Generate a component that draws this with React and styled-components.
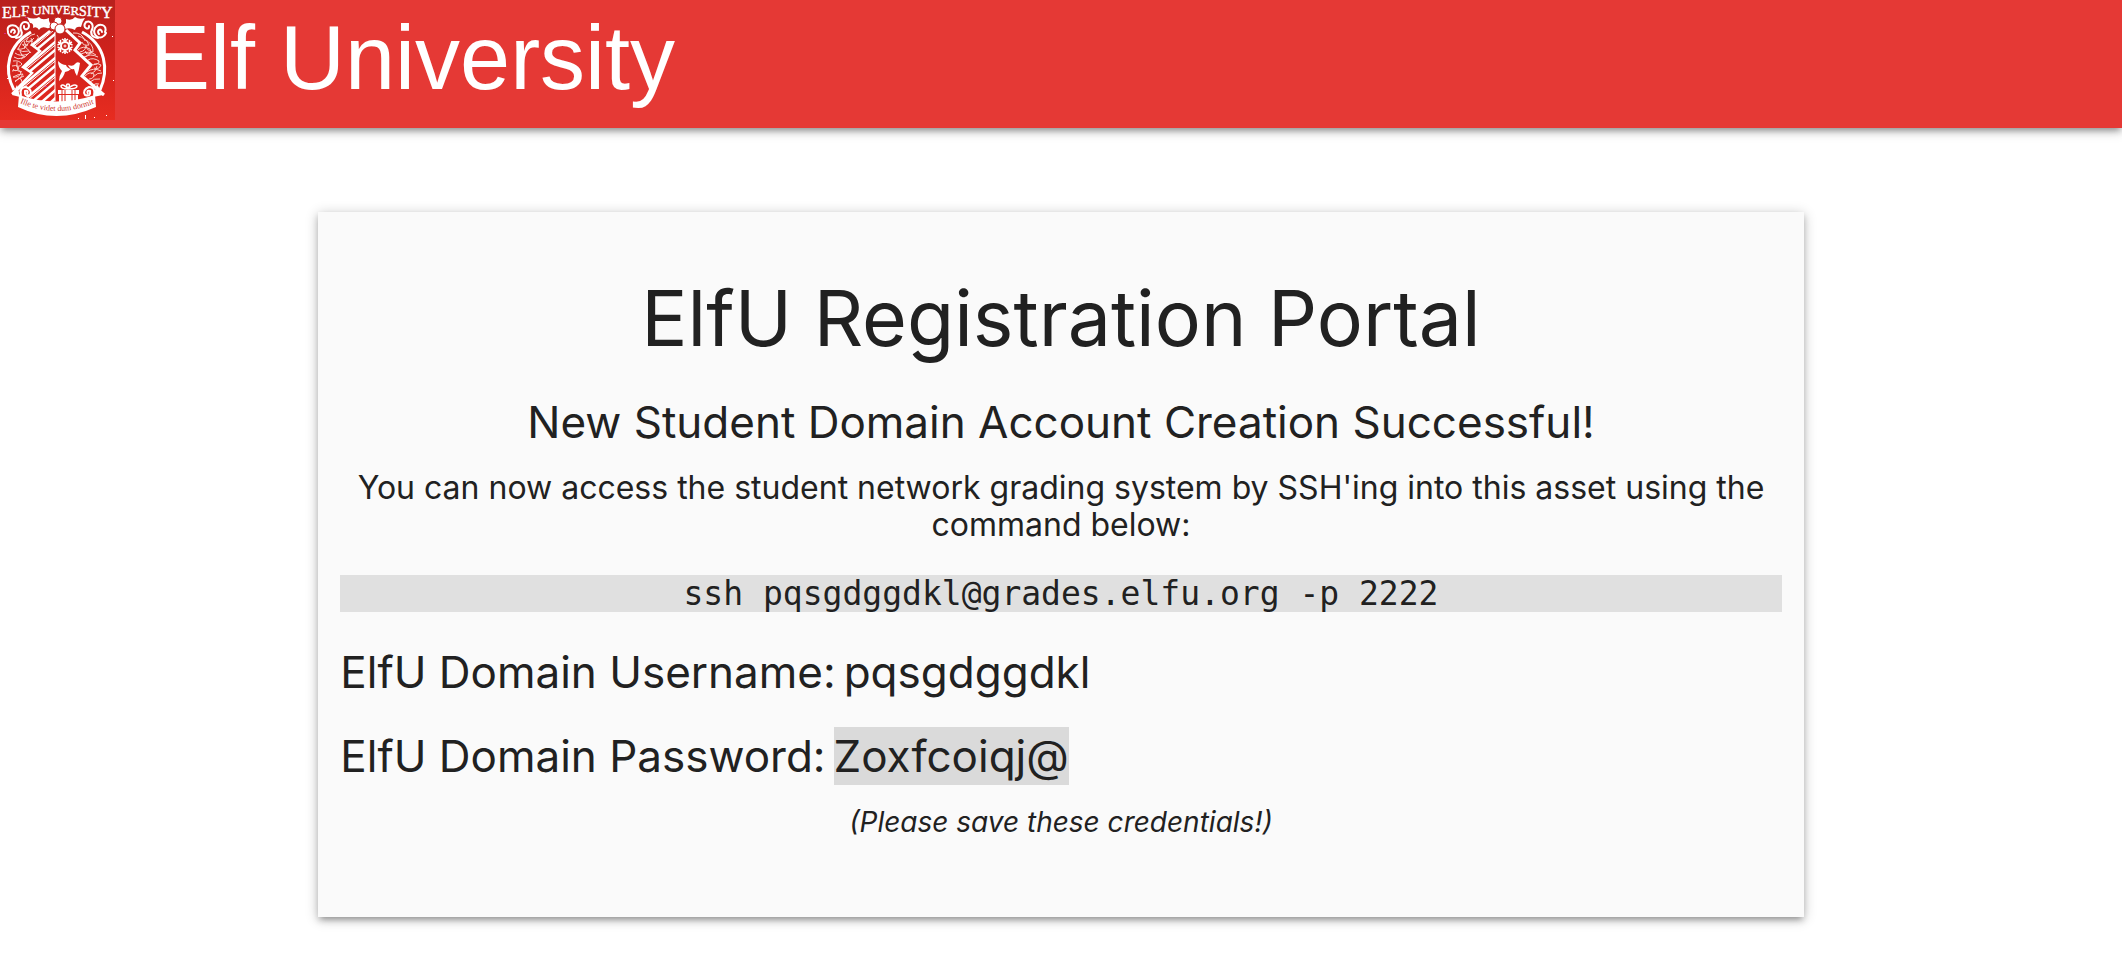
import React from 'react';
import styled, { createGlobalStyle } from 'styled-components';

const GlobalStyle = createGlobalStyle`
  * {
    box-sizing: border-box;
  }

  body {
    margin: 0;
    background: #fff;
    color: #212121;
    font-family: Inter, 'Liberation Sans', sans-serif;
  }
`;

const raised =
  '0 4px 6px 0 rgba(0, 0, 0, 0.16), 0 6px 4px -4px rgba(0, 0, 0, 0.14), 0 2px 12px 0 rgba(0, 0, 0, 0.24)';

const Page = styled.div`
  min-height: 100vh;
  padding-bottom: 32px;
`;

const Header = styled.header`
  display: flex;
  align-items: flex-start;
  gap: 35px;
  height: 128px;
  background: #e53935;
  box-shadow: ${raised};
`;

const Crest = styled.svg`
  display: block;
  flex: none;
  width: 115px;
  height: 120px;
`;

const Brand = styled.a`
  color: #fff;
  font-family: 'Liberation Sans', Arial, sans-serif;
  font-size: 90px;
  line-height: 116px;
  text-decoration: none;
  white-space: nowrap;
`;

const Card = styled.main`
  width: 70%;
  margin: 84px auto 0;
  padding: 60px 22px 79px;
  background: #fafafa;
  box-shadow: ${raised};
`;

const Title = styled.h1`
  margin: 0 0 32px;
  font-size: 77px;
  font-weight: 400;
  line-height: 92px;
  text-align: center;
`;

const Subtitle = styled.h2`
  margin: 0 0 21px;
  font-size: 44px;
  font-weight: 400;
  line-height: 52px;
  text-align: center;
`;

const Intro = styled.p`
  margin: 0 0 32px;
  font-size: 32px;
  line-height: 37px;
  text-align: center;
`;

const Command = styled.code`
  display: block;
  margin-bottom: 34px;
  background: #e0e0e0;
  font-family: 'DejaVu Sans Mono', monospace;
  font-size: 33px;
  line-height: 37px;
  text-align: center;
`;

const Credentials = styled.dl`
  display: grid;
  gap: 32px;
  margin: 0 0 24px;
  font-size: 44px;
  line-height: 52px;
`;

const Credential = styled.div`
  display: flex;
  flex-wrap: wrap;
  gap: 0 8px;
`;

const Value = styled.dd`
  margin: 0;
`;

const Selected = styled.mark`
  padding: 2px 0;
  background: #dadada;
  color: inherit;
`;

const Note = styled.p`
  margin: 0;
  font-size: 28px;
  font-style: italic;
  line-height: 32px;
  text-align: center;
`;

/* Each letter with its size and its step down from the letter before it. */
const titleLetters = [
  ['E', 16, 0], ['L', 15, -1], ['F', 15, -1], [' ', 12, 0], ['U', 13, -1],
  ['N', 12, -1], ['I', 12, 0], ['V', 12, 0], ['E', 12, 0], ['R', 13, 1],
  ['S', 14, 1], ['I', 15, 0], ['T', 15, 1], ['Y', 16, 1],
];

const leftTree = 'M50 31 L32 45 L40 51 L23 67 L32 73 L12 94';
const rightTree = 'M66 30 L80 43 L75 50 L91 65 L82 76 L104 95';

function Swirls() {
  return (
    <g fill="none" stroke="#fbd0cb" strokeWidth="1">
      <path d="M35 34q-7 1-9 8q7-1 8-4M28 37q-8 5-10 12q6 1 9-4q-3-2-5 0M17 49q5 4 12 2M15 53q5 4 13 1M14 57q4 3 8 1q3-3-1-3M13 61q6-1 9 3q-3 4-6 1M12 66q4-2 7 2q-3 5-6 1M12 71q6-2 9 2q-2 5-8 4M13 77q5-3 10-3q-2 5-8 7M15 82q3-4 9-6M31 38q2 4 0 8M23 45q5 4 8 8M20 51q1 5 5 6M37 35q3 2 0 5M33 41q-5 0-6 5M24 41q3 4 0 8M30 52q-5 6-9 7M17 62q-1 9 5 10M18 78q4 0 4 4" />
      <path d="M73 33q9-1 12 8M78 36q8 2 11 9q-6 1-7-3M84 39q10 5 9 13q-6-1-7-6M78 50q5-5 12-1q2 5-3 5q-3-2-1-3M81 54q8-4 15 1M85 57q5-4 13 0M88 60q5-3 11 1q0 4-5 3M93 65q5-3 8 0q-2 5-7 3M87 72q6-5 14-1M85 76q5-5 9-2q0 5-5 5M93 77q5-5 9-4M90 82q4-4 10-3M93 85q3-2 6-1M86 45q0 6-6 7M92 52q-5 5-8 5M97 66q-1 6-6 8" />
    </g>
  );
}

function Snowflake() {
  return (
    <g transform="translate(65 46)" fill="none" stroke="#fff">
      <circle r="4" strokeWidth="2" />
      <circle r="1" strokeWidth="1" />
      {[0, 60, 120, 180, 240, 300].map((angle) => (
        <path key={angle} transform={`rotate(${angle})`} d="M0-4V-8M-3-7L0-5L3-7" strokeWidth="1.5" />
      ))}
    </g>
  );
}

function Gift() {
  return (
    <g>
      <path d="M58 90h21v4H58zM59 95h19v9H59z" fill="#fff" />
      <path d="M62 89v15M65 89v15M72 89v15M75 89v15" stroke="#df2b20" strokeWidth="1" />
      <path d="M68 89q-7 0-7-3q2-3 7 3q-3-5 0-5q3 0 0 5q6-6 9-3q0 3-9 3" fill="none" stroke="#fff" strokeWidth="1.5" />
    </g>
  );
}

function ElfCrest() {
  return (
    <Crest viewBox="0 0 115 120" role="img" aria-label="Elf University crest">
      <defs>
        <linearGradient id="crest-red" x1="0" y1="0" x2="0" y2="1">
          <stop offset="0" stopColor="#b8211d" />
          <stop offset="0.45" stopColor="#d0221c" />
          <stop offset="1" stopColor="#e72c20" />
        </linearGradient>
        <clipPath id="crest-tree">
          <path d="M55 31H50L32 45L40 51L23 67L32 73L14 92Q35 103 55 102Z" />
        </clipPath>
        <path id="crest-motto" d="M20 103Q56 119 96 103" />
      </defs>
      <rect width="115" height="120" fill="url(#crest-red)" />
      <g fill="none" stroke="#fff" strokeWidth="3">
        <path d="M31 32C8 45 3 69 14 90" />
        <path d="M82 32C106 45 109 70 100 90" />
      </g>
      <Swirls />
      <g clipPath="url(#crest-tree)" stroke="#fff" strokeWidth="2.5">
        <path d="M10 56L60 14M10 64L60 22M10 72L60 30M10 80L60 38M10 88L60 46M10 96L60 54M10 104L60 62M10 112L60 70M18 114L60 78M28 114L60 86M38 114L60 94" />
        <path d="M10 67L60 25M10 83L60 41M10 99L60 57M10 115L60 73" strokeWidth="1" />
      </g>
      <path d="M55 32V101" stroke="#fff" strokeWidth="1" />
      <path d={leftTree} fill="none" stroke="#fff" strokeWidth="2.5" />
      <path d={rightTree} fill="none" stroke="#fff" strokeWidth="3" />
      <g fill="none" stroke="#fff" strokeWidth="2" strokeLinecap="round">
        <path d="M8 32C6 25 14 23 18 28C22 36 11 41 8 33M11 32C12 27 17 31 14 33" />
        <path d="M22 33C18 25 23 20 28 23C32 29 23 32 24 26M21 30Q24 37 16 38" />
        <path d="M105 32C108 25 99 22 95 28C91 36 102 42 106 33M102 32C101 27 96 31 99 34" />
        <path d="M91 32C95 25 91 20 86 22C81 28 90 31 89 26M92 29Q89 37 98 38" />
      </g>
      <path d="M27 17Q34 20 39 17Q42 21 49 18Q48 23 53 25Q50 29 47 28Q41 26 39 30Q37 26 33 28Q34 23 30 23Z" fill="#fff" />
      <path d="M66 19Q72 21 75 17Q79 20 85 18Q82 22 81 27Q76 26 75 30Q70 27 65 29Q63 25 66 23Z" fill="#fff" />
      <g fill="#fff" stroke="#c5221d" strokeWidth="1">
        <circle cx="58" cy="21" r="4" />
        <circle cx="54" cy="26" r="4" />
        <circle cx="60" cy="29" r="5" />
      </g>
      <text x="2" y="18" fill="#fff" stroke="#fff" strokeWidth="0.4" fontFamily="'Liberation Serif', serif" xmlSpace="preserve">
        {titleLetters.map(([letter, size, step], index) => (
          <tspan key={index} dy={step} fontSize={size}>
            {letter}
          </tspan>
        ))}
      </text>
      <Snowflake />
      <path d="M58 61Q62 65 66 65Q67 68 71 69Q68 72 65 72Q64 77 59 81Q59 76 62 71Q58 67 58 61ZM68 65Q73 67 75 64Q77 61 80 63Q79 71 77 76Q75 73 74 69Q70 70 68 65Z" fill="#fff" />
      <Gift />
      <path d="M12 95L17 85L20 97ZM103 95L97 84L93 97Z" fill="#fff" />
      <g fill="#df2920" stroke="#fff" strokeWidth="2">
        <path d="M21 96Q19 87 26 87Q33 90 30 95Q24 97 25 91Q29 90 27 94" />
        <path d="M94 96Q96 87 89 87Q82 90 85 95Q91 97 90 91Q86 90 88 94" />
      </g>
      <path d="M19 95Q56 108 95 95L96 107Q56 125 18 107Z" fill="#fff" />
      <text fill="#cf3932" fontFamily="'Liberation Serif', serif" fontSize="8">
        <textPath href="#crest-motto">Ille te videt dum dormit</textPath>
      </text>
      <path d="M113 80h1v1h-1zM7 78h2v1H7zM112 36h1v1h-1zM78 118h1v1h-1zM85 115h1v4h-1zM94 117h1v1h-1zM106 115h1v1h-1z" fill="#fff" />
      <path d="M4 33h2v1H4zM25 17h2v1h-2zM36 86h1v1h-1zM45 86h2v1h-2z" fill="#d82c80" />
    </Crest>
  );
}

export default function App() {
  return (
    <Page>
      <GlobalStyle />
      <Header>
        <ElfCrest />
        <Brand href="#">Elf University</Brand>
      </Header>
      <Card>
        <Title>ElfU Registration Portal</Title>
        <Subtitle>New Student Domain Account Creation Successful!</Subtitle>
        <Intro>
          You can now access the student network grading system by SSH'ing into this asset using the
          command below:
        </Intro>
        <Command>ssh pqsgdggdkl@grades.elfu.org -p 2222</Command>
        <Credentials>
          <Credential>
            <dt>ElfU Domain Username:</dt>
            <Value>pqsgdggdkl</Value>
          </Credential>
          <Credential>
            <dt>ElfU Domain Password:</dt>
            <Value>
              <Selected>Zoxfcoiqj@</Selected>
            </Value>
          </Credential>
        </Credentials>
        <Note>(Please save these credentials!)</Note>
      </Card>
    </Page>
  );
}
